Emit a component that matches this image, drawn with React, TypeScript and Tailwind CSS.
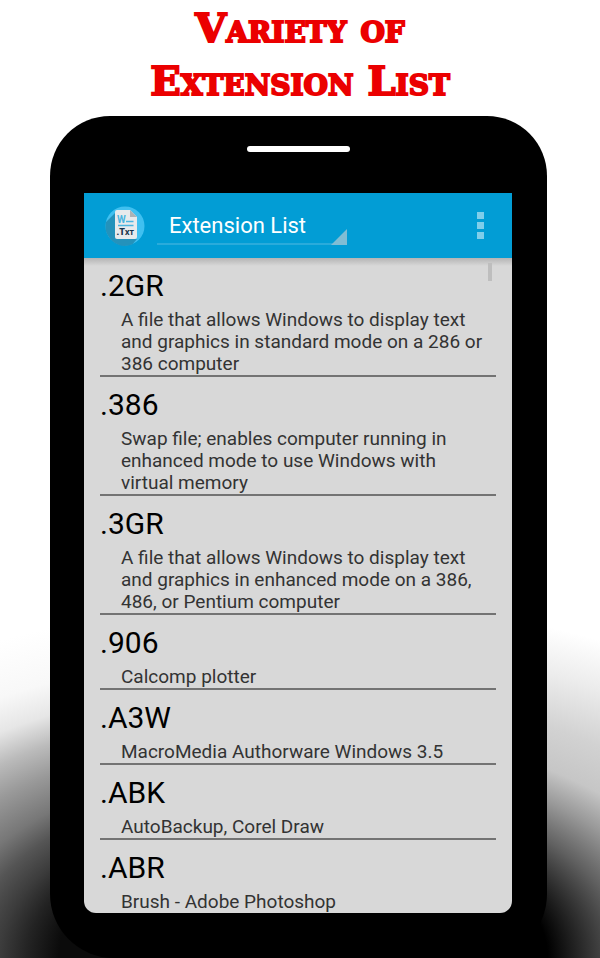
const extensions = [
  {
    name: '.2GR',
    description: 'A file that allows Windows to display text and graphics in standard mode on a 286 or 386 computer',
  },
  {
    name: '.386',
    description: 'Swap file; enables computer running in enhanced mode to use Windows with virtual memory',
  },
  {
    name: '.3GR',
    description: 'A file that allows Windows to display text and graphics in enhanced mode on a 386, 486, or Pentium computer',
  },
  { name: '.906', description: 'Calcomp plotter' },
  { name: '.A3W', description: 'MacroMedia Authorware Windows 3.5' },
  { name: '.ABK', description: 'AutoBackup, Corel Draw' },
  { name: '.ABR', description: 'Brush - Adobe Photoshop' },
]

function AppLogo() {
  return (
    <svg viewBox="0 0 40 40" className="w-10 h-10 flex-shrink-0" role="img" aria-label="App logo">
      <circle cx="20" cy="20" r="19.5" fill="#40c0f0" />
      <path d="M1 16 12 5v28h20l-4.500 5.200A19.500 19.500 0 0 1 1 16z" fill="#2492bb" />
      <path d="M12 4h13l7 7v20a2 2 0 0 1-2 2H12a2 2 0 0 1-2-2V6a2 2 0 0 1 2-2z" fill="#e8eaec" />
      <path d="M25 4l7 7h-7z" fill="#adb2b5" />
      <path d="M21 15.500h7.500M13 19.500h15.500" stroke="#4bb5df" strokeWidth="1.600" />
      <text x="12" y="16.500" fontSize="10" fontWeight="700" fill="#4bb5df" fontFamily="Roboto, sans-serif">W</text>
      <text x="11.500" y="28.500" fontSize="9" fontWeight="900" fill="#17324a" fontFamily="Roboto, sans-serif">
        .T<tspan fontSize="7">XT</tspan>
      </text>
    </svg>
  )
}

function ActionBar() {
  return (
    <header className="flex items-center h-[65px] pl-[21px] pr-5 bg-[#029dd5]">
      <AppLogo />
      <div className="relative ml-3 mt-0.5 w-[190px] h-9 border-b-2 border-[#2aabdb]">
        <select
          aria-label="View"
          className="appearance-none w-full h-full pl-3 bg-transparent text-white text-[22px] leading-8 outline-none"
        >
          <option>Extension List</option>
        </select>
        <svg viewBox="0 0 16 16" className="absolute right-0 -bottom-0.5 w-4 h-4 pointer-events-none">
          <path d="M16 0v16H0z" fill="#80bdd4" />
        </svg>
      </div>
      <button type="button" aria-label="More options" className="ml-auto flex flex-col gap-[3px] p-2">
        <span className="w-[7px] h-[7px] bg-[#80ceea]" />
        <span className="w-[7px] h-[7px] bg-[#80ceea]" />
        <span className="w-[7px] h-[7px] bg-[#80ceea]" />
      </button>
    </header>
  )
}

function ExtensionList() {
  return (
    <div className="relative">
      <div className="absolute inset-x-0 top-0 h-2 bg-gradient-to-b from-[#b4b4b4] to-[#d8d8d8]" />
      <div className="absolute top-[5px] right-5 w-1 h-[18px] bg-[#bebebe]" />
      <ul className="relative px-4">
        {extensions.map((ext) => (
          <li key={ext.name} className="pt-2 border-b-2 border-[#737373] last:border-b-0">
            <h2 className="mb-[3px] text-[30px] leading-10 text-black">{ext.name}</h2>
            <p className="pl-[21px] pr-2 text-[19px] leading-[22px] text-[#333]">{ext.description}</p>
          </li>
        ))}
      </ul>
    </div>
  )
}

export default function App() {
  return (
    <div className="min-h-screen overflow-hidden bg-white bg-[radial-gradient(652px_358px_at_100%_100%,#0b0b0b_37%,#242424_42%,#3c3c3c_46%,#555_51%,#777_56%,#999_64%,#bbb_71%,#e6e6e6_78%,#f8f8f8_86%,#fff_100%),radial-gradient(652px_358px_at_0%_100%,#000_38%,#303030_44%,#606060_50%,#999_58%,#c6c6c6_65%,#d2d2d2_75%,#ececec_88%,#fff_100%)] bg-[length:50%_100%] [background-position:left,right] bg-no-repeat font-[Roboto,sans-serif]">
      <h1 className="h-[116px] pt-px text-center text-[#eb0000] font-bold text-[40px] leading-[53px] [font-family:'DejaVu_Serif',serif] [font-variant-caps:small-caps] [-webkit-text-stroke:2px_#eb0000]">
        Variety of
        <br />
        Extension List
      </h1>
      <main className="ml-[50px] mr-[53px] pl-[34px] pr-[35px] pb-[45px] bg-black rounded-t-[60px] rounded-b-[64px]">
        <div className="flex items-center justify-center h-[77px]">
          <div className="w-[103px] h-[6px] -mt-3 rounded-full bg-white" />
        </div>
        <div className="overflow-hidden rounded-b-xl bg-[#d8d8d8]">
          <ActionBar />
          <ExtensionList />
        </div>
      </main>
    </div>
  )
}
